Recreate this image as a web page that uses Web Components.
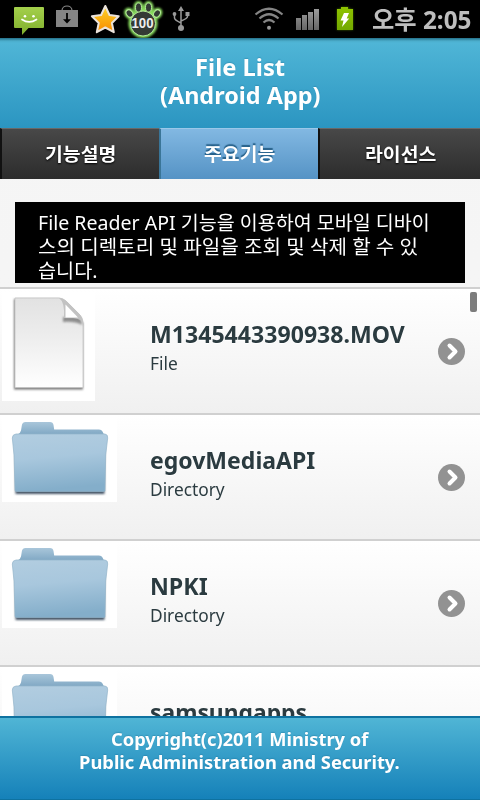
<!DOCTYPE html>
<html lang="ko"><head><meta charset="utf-8"><title>File List</title>
<style>
html,body{margin:0;height:100%}
body{font-family:"Noto Sans","Noto Sans CJK KR",sans-serif;background:#f6f6f6;overflow:hidden}
</style></head><body>
<file-app></file-app>
<script>
const define=(name,html,setup)=>customElements.define(name,class extends HTMLElement{
  connectedCallback(){
    if(this.shadowRoot)return;
    this.attachShadow({mode:'open'}).innerHTML=typeof html==='function'?html(this):html;
    if(setup)setup(this);
  }
});

// One line of text, condensed or widened to the width in the "w" attribute.
define('fit-text',`<style>:host{display:block;white-space:nowrap;height:var(--lh);line-height:var(--lh)}
span{display:inline-block;transform-origin:0 50%;line-height:var(--lh);vertical-align:top}</style><span><slot></slot></span>`,el=>{
  const s=el.shadowRoot.querySelector('span'),w=+el.getAttribute('w');
  el.style.width=w+'px';
  s.style.transform=`scaleX(${w/s.offsetWidth})`;
});

define('status-bar',`<style>
:host{display:flex;height:38px;background:#000;color:#bebebe;box-sizing:border-box;padding-right:9px;justify-content:space-between}
svg{display:block;flex:none}
fit-text{--lh:38px;font-size:25px;font-weight:700;font-family:"Noto Sans","Noto Sans CJK KR",sans-serif}
</style>
<svg width="364" height="38" viewBox="0 0 364 38">
<defs><linearGradient id="g" x2="0" y2="1"><stop stop-color="#a4d04c"/><stop offset="1" stop-color="#7fae2c"/></linearGradient>
<linearGradient id="o" x2="0" y2="1"><stop stop-color="#ffd429"/><stop offset="1" stop-color="#f78b00"/></linearGradient>
<linearGradient id="b" x2="0" y2="1"><stop stop-color="#8fc400"/><stop offset="1" stop-color="#72a800"/></linearGradient>
<linearGradient id="s" x2="0" y2="1"><stop stop-color="#9b9b9b"/><stop offset="1" stop-color="#666"/></linearGradient>
<filter id="f" x="-30%" y="-30%" width="160%" height="160%"><feGaussianBlur stdDeviation="1.1"/></filter></defs>
<path d="M15 7h28a1 1 0 0 1 1 1v19a1 1 0 0 1-1 1H28.500l-6.500 7v-7h-7a1 1 0 0 1-1-1V8a1 1 0 0 1 1-1z" fill="url(#g)"/>
<circle cx="25" cy="16.300" r="1.300" fill="#fff"/><circle cx="33.500" cy="16.300" r="1.300" fill="#fff"/><path d="M22 19.500q7.200 4.800 14.500 0" fill="none" stroke="#fff" stroke-width="1.700" stroke-linecap="round"/>
<path d="M62 10.500c0-6 10-6 10 0" fill="none" stroke="#888" stroke-width="1.200"/><path d="M56 10h22v17H56z" fill="#858585"/><path d="M67 13v8" stroke="#000" stroke-width="1.800"/><path d="M63 19.200h8l-4 4.300z"/>
<path d="M105.300 6l4.200 9 9.200 1.200-6.800 6.800 1.900 9.200-8.500-4.700-8.500 4.700 1.900-9.200-6.800-6.800 9.200-1.200z" fill="url(#o)" stroke="#ebe3db" stroke-width="2" stroke-linejoin="round"/>
<g fill="#303630" stroke="#8be060" stroke-width="4" filter="url(#f)"><circle cx="143" cy="23.500" r="12.500"/><ellipse cx="129.500" cy="13.500" rx="3" ry="4" transform="rotate(-35 129.500 13.500)"/><ellipse cx="138.500" cy="7.500" rx="3" ry="4.500"/><ellipse cx="148.500" cy="7.500" rx="3" ry="4.500"/><ellipse cx="157" cy="13.500" rx="3" ry="4" transform="rotate(35 157 13.500)"/></g>
<g fill="#343a35" stroke="#b4ea98" stroke-width="1"><circle cx="143" cy="23.500" r="12.500"/><ellipse cx="129.500" cy="13.500" rx="3" ry="4" transform="rotate(-35 129.500 13.500)"/><ellipse cx="138.500" cy="7.500" rx="3" ry="4.500"/><ellipse cx="148.500" cy="7.500" rx="3" ry="4.500"/><ellipse cx="157" cy="13.500" rx="3" ry="4" transform="rotate(35 157 13.500)"/></g>
<text x="142.500" y="28" textLength="22" lengthAdjust="spacingAndGlyphs" text-anchor="middle" fill="#eee" font-family="Liberation Sans" font-size="14" font-weight="700">100</text>
<g fill="none" stroke="#999" stroke-width="1.500"><path d="M181 10v18M174.500 14.500v3.500q0 2 6.500 5M187.500 14v2.500q0 2-6.500 4.500"/></g><g fill="#999"><path d="M178 11l3-5 3 5z"/><circle cx="181" cy="28" r="3"/><circle cx="174.500" cy="14" r="1.900"/><path d="M185.500 12h4v4h-4z"/></g>
<g fill="none" stroke="#858585" stroke-width="2.200"><path d="M255.500 14.500q13.500-11.500 27 0"/><path d="M259.500 18.500q9.500-8.500 19 0"/><path d="M263.500 22.500q5.500-5 11 0"/></g><circle cx="269" cy="27.800" r="2" fill="#999"/>
<path d="M296 18h5v12h-5zM302 15h5v15h-5zM308 12h5v18h-5zM314 9h5v21h-5z" fill="url(#s)"/>
<path d="M337 9h4V7h8v2h4v21h-16z" fill="#6ba800" filter="url(#f)" opacity=".6"/><path d="M337 9h4V7h7v2h5v21h-16z" fill="url(#b)"/><path d="M344 13h5l-2.300 5.500h2.500L342 27l1.500-6.500h-3z" fill="#fff"/>
</svg>
<fit-text w="99">오후 2:05</fit-text>`);

define('title-bar',`<style>:host{display:flex;flex-direction:column;align-items:center;height:90px;box-sizing:border-box;padding:15px 1px 0 0;background:linear-gradient(#236f88 0,#4badcb 3px,#4fb5d6 5px,#2b95c1);color:#fff;font-weight:700;font-size:24px;--lh:28px;text-shadow:0 -1px 1px rgba(30,110,145,.35)}</style><slot></slot>`);

define('tab-item',`<style>:host{display:flex;justify-content:center;height:51px;box-sizing:border-box;padding-top:10px;background:linear-gradient(#484848,#2c2c2c);border-top:1px solid #686868;border-left:2px solid #111;color:#fff;font-size:18px;font-weight:700;text-shadow:0 1px 2px #000;--lh:28px;font-family:"Noto Sans CJK KR",sans-serif}
:host([active]){background:linear-gradient(#82b8e2,#5593c5);border-top-color:#9bc8e8;border-left-color:#3a7597;text-shadow:0 -2px 1px #245f88}</style><fit-text w="71"><slot></slot></fit-text>`);
define('tab-bar',`<style>:host{display:grid;grid-template-columns:159px 159px 162px;height:51px}</style><slot></slot>`);

define('info-box',`<style>:host{display:block;margin:23px 15px 4px;height:81px;box-sizing:border-box;padding:9px 0 0 22.500px;background:#000;color:#fff;font-size:19px;--lh:24px}</style><slot></slot>`);

const fileArt=`<svg width="93" height="109" viewBox="2 292 93 109"><defs><linearGradient id="p" x2="0" y2="1"><stop stop-color="#e2e2e2"/><stop offset=".4" stop-color="#ececec"/><stop offset="1" stop-color="#fff"/></linearGradient><filter id="f" x="-10%" y="-20%" width="120%" height="150%"><feGaussianBlur stdDeviation="1.200"/></filter></defs>
<path d="M2 292h93v109H2z" fill="#fff"/><path d="M14 299h46l23 24v66.500H14z" fill="#777" filter="url(#f)"/><path d="M15 298h44q4 0 8 4l13 13q3 3 3 8v64.500H15z" fill="url(#p)" stroke="#c4c4c4" stroke-width=".8"/><path d="M63 317h17l2.500 8q-8-4-19.500-3z" fill="#777" filter="url(#f)" opacity=".8"/><path d="M59 298q6 4 5 20 14-1 18.500 4 0-5-4-9l-11-11q-4-4-8.500-4z" fill="#c2c2c2"/><path d="M65.500 304.500v13h12.500z" fill="#fff"/></svg>`;
const folderArt=`<svg width="115" height="87" viewBox="2 415 115 87"><defs><linearGradient id="p" x2=".15" y2="1"><stop stop-color="#b2cde0"/><stop offset=".45" stop-color="#a8c7dd"/><stop offset="1" stop-color="#84aeca"/></linearGradient><linearGradient id="k" x2="0" y2="1"><stop stop-color="#a9c6da"/><stop offset="1" stop-color="#80a8c4"/></linearGradient><filter id="f" x="-10%" y="-10%" width="120%" height="120%"><feGaussianBlur stdDeviation=".9"/></filter></defs>
<path d="M2 415h115v87H2z" fill="#fff"/><path d="M15.500 436h89v58h-89z" fill="#456" filter="url(#f)"/><path d="M17.500 434.500q3-1.500 3.500-4l1-6q.5-2.500 3-2.500h25q3 0 3.500 3l.7 4.500H99q2.500 0 3.500 2l1.500 3z" fill="url(#k)"/><path d="M16 434h89q3 .5 2.700 4l-2 17-.7 35.500q0 1-1.500 1h-87q-1.500 0-1.500-1.500L14 455l-1.700-17q0-3.500 3.700-4z" fill="url(#p)" stroke="#94b4ca" stroke-width=".7"/></svg>`;
define('file-row',el=>`<style>:host{display:flex;height:126px;box-sizing:border-box;border-top:2px solid #d0d0d0;background:linear-gradient(#fff,#f0f0f0);color:#2b3b40;padding-left:2px;align-items:flex-start;overflow:hidden}
.art{width:147.500px;flex:none;padding-top:var(--top)}svg{display:block}
.text{flex:1;padding-top:28px}
.name{--lh:34px;font-size:24px;font-weight:700;text-shadow:0 1px 0 #fff}.kind{--lh:24px;font-size:18px}
.go{margin:49px 15px 0 0}</style>
<div class="art" style="--top:${el.hasAttribute('file')?3:0}px">${el.hasAttribute('file')?fileArt:folderArt}</div>
<div class="text"><fit-text class="name" w="${el.getAttribute('w')}">${el.getAttribute('name')}</fit-text><fit-text class="kind" w="${el.hasAttribute('file')?28:75}">${el.hasAttribute('file')?'File':'Directory'}</fit-text></div>
<svg class="go" width="27" height="27" viewBox="0 0 27 27"><circle cx="13.500" cy="13.500" r="13.500" fill="#929292"/><path d="M11.500 7.500l6 6-6 6" fill="none" stroke="#fff" stroke-width="4" stroke-linecap="round" stroke-linejoin="round"/></svg>`);

define('file-list',`<style>:host{display:block;height:429px;overflow:hidden;position:relative}
i{position:absolute;top:5px;right:3px;width:7px;height:20px;border-radius:2px;background:#7c7c7c}</style><slot></slot><i></i>`);
define('page-footer',`<style>:host{display:flex;flex-direction:column;align-items:center;height:84px;box-sizing:border-box;border-top:2px solid #0e72a0;border-bottom:1px solid #0e72a0;padding:9px 1px 0 0;background:linear-gradient(#50b5d5,#1581b9);color:#fff;font-size:18.500px;font-weight:700;--lh:23px;text-shadow:0 -1px 1px rgba(30,110,145,.35)}</style><slot></slot>`);

define('file-app',`<style>:host{display:flex;flex-direction:column;width:480px;height:800px;overflow:hidden;background:linear-gradient(#f6f6f6,#f3f3f3)}:host>*{flex:none}</style>
<status-bar></status-bar>
<title-bar><fit-text w="90">File List</fit-text><fit-text w="160">(Android App)</fit-text></title-bar>
<tab-bar><tab-item>기능설명</tab-item><tab-item active>주요기능</tab-item><tab-item>라이선스</tab-item></tab-bar>
<info-box><fit-text w="392">File Reader API 기능을 이용하여 모바일 디바이</fit-text><fit-text w="380">스의 디렉토리 및 파일을 조회 및 삭제 할 수 있</fit-text><fit-text w="60">습니다.</fit-text></info-box>
<file-list><file-row file name="M1345443390938.MOV" w="255"></file-row><file-row name="egovMediaAPI" w="165"></file-row><file-row name="NPKI" w="58"></file-row><file-row name="samsungapps" w="157"></file-row></file-list>
<page-footer><fit-text w="257">Copyright(c)2011 Ministry of</fit-text><fit-text w="321">Public Administration and Security.</fit-text></page-footer>`);
</script></body></html>
